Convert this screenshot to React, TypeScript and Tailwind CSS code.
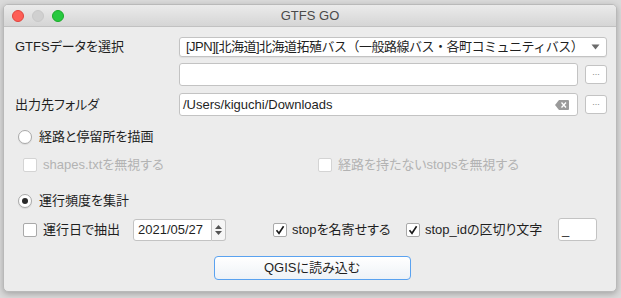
import React from "react"

const font = { fontFamily: '"Liberation Sans", "Noto Sans CJK JP", sans-serif' }

function Check({ checked, disabled }: { checked?: boolean; disabled?: boolean }) {
  return (
    <span
      className={`flex h-[14px] w-[14px] shrink-0 items-center justify-center rounded-[2px] border bg-white ${
        disabled ? "border-[#d4d4d4]" : "border-[#a9a9a9]"
      }`}
    >
      {checked && (
        <svg width="10" height="10" viewBox="0 0 10 10">
          <path d="M1.5 5.2 L4 8.3 L8.6 1.2" fill="none" stroke="#1a1a1a" strokeWidth="1.6" />
        </svg>
      )}
    </span>
  )
}

function Radio({ checked }: { checked?: boolean }) {
  return (
    <span className="flex h-[14px] w-[14px] shrink-0 items-center justify-center rounded-full border border-[#a9a9a9] bg-white shadow-[0_1px_1px_rgba(0,0,0,0.08)]">
      {checked && <span className="h-[6px] w-[6px] rounded-full bg-[#2a2a2a]" />}
    </span>
  )
}

function DotsButton() {
  return (
    <div className="ml-[7px] flex h-[19px] w-[22px] items-start justify-center rounded-[3px] border border-[#c3c3c3] bg-white text-[9px] leading-[12px] text-[#888]">
      ...
    </div>
  )
}

export default function App() {
  return (
    <div className="h-[298px] w-[621px] overflow-hidden bg-[#dadada] [font-feature-settings:'palt']" style={font}>
      <div className="ml-[3px] mt-[4px] flex h-[288px] w-[614px] flex-col overflow-hidden rounded-[5px] border border-[#b9b9b9] bg-[#ececec] shadow-[0_2px_6px_rgba(0,0,0,0.25)]">
        {/* title bar */}
        <div className="relative flex h-[22px] shrink-0 items-center border-b border-[#c1c1c1] bg-gradient-to-b from-[#ebebeb] to-[#d5d5d5]">
          <div className="flex gap-[8px] pl-[8px]">
            <span className="h-[12px] w-[12px] rounded-full border border-[#e0443e] bg-[#fe5f57]" />
            <span className="h-[12px] w-[12px] rounded-full border border-[#c8c8c8] bg-[#d0d0d0]" />
            <span className="h-[12px] w-[12px] rounded-full border border-[#1aab29] bg-[#28c940]" />
          </div>
          <div className="absolute inset-0 flex items-center justify-center text-[13px] text-[#4a4a4a]">GTFS GO</div>
        </div>

        <div className="flex flex-col pl-[11px] pr-[9px] text-[13px] text-[#1f1f1f]">
          {/* GTFS data select */}
          <div className="mt-[10px] flex h-[20px] items-center">
            <div className="w-[164px] shrink-0">GTFSデータを選択</div>
            <div className="flex h-[20px] w-[429px] items-center justify-between rounded-[3px] border border-[#c3c3c3] bg-white pl-[6px] pr-[6px] shadow-[0_1px_1px_rgba(0,0,0,0.06)]">
              <span className="whitespace-nowrap tracking-[-0.5px] [font-feature-settings:normal]">
                [JPN][北海道]北海道拓殖バス（一般路線バス・各町コミュニティバス）
              </span>
              <svg width="9" height="6" viewBox="0 0 9 6">
                <path d="M0.5 0.5 L8.5 0.5 L4.5 5.5 Z" fill="#6b6b6b" />
              </svg>
            </div>
          </div>

          {/* second line edit */}
          <div className="mt-[6px] flex h-[23px] items-center">
            <div className="w-[164px] shrink-0" />
            <div className="h-[23px] w-[399px] rounded-[3px] border border-[#c3c3c3] bg-white" />
            <DotsButton />
          </div>

          {/* output folder */}
          <div className="mt-[7px] flex h-[23px] items-center">
            <div className="w-[164px] shrink-0">出力先フォルダ</div>
            <div className="flex h-[23px] w-[399px] items-center justify-between rounded-[3px] border border-[#c3c3c3] bg-white pl-[3px] pr-[8px]">
              <span>/Users/kiguchi/Downloads</span>
              <svg width="14" height="10" viewBox="0 0 14 10">
                <path d="M4 0 H13 a1 1 0 0 1 1 1 V9 a1 1 0 0 1 -1 1 H4 L0 5 Z" fill="#9a9a9a" />
                <path d="M6.5 2.5 L11 7.5 M11 2.5 L6.5 7.5" stroke="#fff" strokeWidth="1.3" />
              </svg>
            </div>
            <DotsButton />
          </div>

          {/* radio 1 */}
          <div className="mt-[12px] flex h-[18px] items-center gap-[7px] pl-[3px]">
            <Radio />
            <span>経路と停留所を描画</span>
          </div>

          {/* disabled checkboxes */}
          <div className="mt-[10px] flex h-[18px] items-center text-[#b3b3b3]">
            <div className="flex w-[303px] items-center gap-[6px] pl-[8px]">
              <Check disabled />
              <span>shapes.txtを無視する</span>
            </div>
            <div className="flex items-center gap-[6px]">
              <Check disabled />
              <span>経路を持たないstopsを無視する</span>
            </div>
          </div>

          {/* radio 2 */}
          <div className="mt-[18px] flex h-[18px] items-center gap-[7px] pl-[3px]">
            <Radio checked />
            <span>運行頻度を集計</span>
          </div>

          {/* frequency options */}
          <div className="mt-[8px] flex h-[23px] items-center">
            <div className="flex w-[118px] shrink-0 items-center gap-[6px] pl-[8px]">
              <Check />
              <span>運行日で抽出</span>
            </div>
            <div className="flex h-[22px] w-[93px] items-center">
              <div className="flex h-[22px] w-[79px] items-center rounded-l-[3px] border border-[#c3c3c3] bg-white pl-[4px]">
                2021/05/27
              </div>
              <div className="flex h-[22px] w-[14px] flex-col items-center justify-center gap-[2px] rounded-r-[3px] border border-l-0 border-[#c3c3c3] bg-[#f6f6f6]">
                <svg width="7" height="4" viewBox="0 0 7 4">
                  <path d="M0 4 L3.5 0 L7 4 Z" fill="#555" />
                </svg>
                <svg width="7" height="4" viewBox="0 0 7 4">
                  <path d="M0 0 L7 0 L3.5 4 Z" fill="#555" />
                </svg>
              </div>
            </div>
            <div className="ml-[47px] flex w-[133px] shrink-0 items-center gap-[5px]">
              <Check checked />
              <span className="whitespace-nowrap">stopを名寄せする</span>
            </div>
            <div className="flex w-[152px] shrink-0 items-center gap-[5px]">
              <Check checked />
              <span className="whitespace-nowrap">stop_idの区切り文字</span>
            </div>
            <div className="flex h-[23px] w-[39px] items-center rounded-[3px] border border-[#c3c3c3] bg-white pl-[3px]">
              _
            </div>
          </div>

          {/* load button */}
          <div className="mt-[15px] flex justify-center pl-[2px]">
            <div className="flex h-[24px] w-[197px] items-center justify-center rounded-[4px] border border-[#5aa2f0] bg-gradient-to-b from-[#ffffff] to-[#eef2f7] text-[13px]">
              QGISに読み込む
            </div>
          </div>
        </div>
      </div>
    </div>
  )
}
